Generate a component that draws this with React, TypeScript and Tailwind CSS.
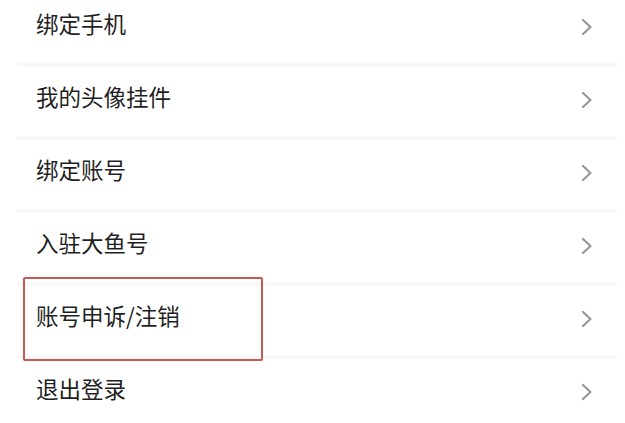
import React from "react";

const items = ["绑定手机", "我的头像挂件", "绑定账号", "入驻大鱼号", "账号申诉/注销", "退出登录"];

function Chevron() {
  return (
    <svg width="12" height="18" viewBox="0 0 12 18" fill="none" className="mb-[4px]">
      <polyline points="2,2 9.5,9 2,16" stroke="#979797" strokeWidth="2.2" strokeLinecap="round" strokeLinejoin="round" />
    </svg>
  );
}

export default function App() {
  return (
    <div
      className="w-[625px] h-[423px] overflow-hidden bg-white"
      style={{ fontFamily: '"Noto Sans CJK SC", "Noto Sans", sans-serif' }}
    >
      <div className="-mt-[6px] flex flex-col">
        {items.map((t, i) => (
          <div key={t} className="flex flex-col">
            <div className="relative flex h-[69px] items-center justify-between pl-[36px] pr-[32px]">
              <span className="mb-[11px] text-[22.5px] font-normal leading-none text-[#1f1f1f]">{t}</span>
              <Chevron />
              {i === 4 && (
                <div className="absolute left-[23px] top-[-9px] h-[84px] w-[240px] rounded-[2px] border-2 border-[#c55a54]" />
              )}
            </div>
            {i < items.length - 1 && <div className="ml-[17px] mr-[8px] h-[4px] bg-[#f8f8f8]" />}
          </div>
        ))}
      </div>
    </div>
  );
}
